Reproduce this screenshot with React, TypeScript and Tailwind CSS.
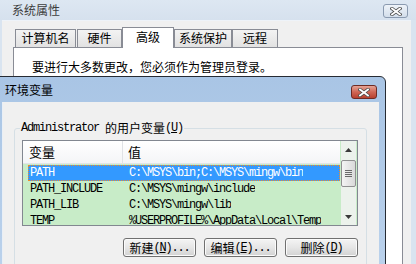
import React from "react";

const cjk = "[font-family:'Noto_Sans_CJK_SC',sans-serif]";
const mono = "[font-family:'Liberation_Mono','Noto_Sans_CJK_SC',monospace] text-[12px] tracking-[-1.2px]";

function XGlyph() {
  return (
    <svg width="12" height="9" viewBox="0 0 12 9">
      <path d="M2 1.5 L10 7.5 M10 1.5 L2 7.5" stroke="#4a4a4a" strokeWidth="3.4" strokeLinecap="square" />
      <path d="M2 1.5 L10 7.5 M10 1.5 L2 7.5" stroke="#ffffff" strokeWidth="1.8" strokeLinecap="square" />
    </svg>
  );
}

function Arrow({ down }: { down?: boolean }) {
  return (
    <svg width="7" height="4" viewBox="0 0 7 4">
      <path d={down ? "M0 0 H7 L3.5 4 Z" : "M0 4 H7 L3.5 0 Z"} fill="#3a3a3a" />
    </svg>
  );
}

const rows = [
  { name: "PATH", value: "C:\\MSYS\\bin;C:\\MSYS\\mingw\\bin", selected: true },
  { name: "PATH_INCLUDE", value: "C:\\MSYS\\mingw\\include" },
  { name: "PATH_LIB", value: "C:\\MSYS\\mingw\\lib" },
  { name: "TEMP", value: "%USERPROFILE%\\AppData\\Local\\Temp" },
];

const tabs = [
  { label: "计算机名", w: "w-[61px] ml-[2px]" },
  { label: "硬件", w: "w-[45px] ml-[1px]" },
  { label: "高级", w: "w-[52px]", active: true },
  { label: "系统保护", w: "w-[58px]" },
  { label: "远程", w: "w-[46px]" },
];

function WinButton({ label, hint, tail }: { label: string; hint: string; tail?: string }) {
  return (
    <button className="flex h-[19px] w-[73px] items-center justify-center rounded-[3px] border border-[#707070] bg-linear-to-b from-[#f4f4f4] via-[#e6e6e6] to-[#d2d2d2] text-black shadow-[inset_0_0_0_1px_#fbfbfb]">
      <span className={`${cjk} text-[12px] leading-none`}>{label}</span>
      <span className={`${mono} leading-none`}>
        (<u>{hint}</u>){tail}
      </span>
    </button>
  );
}

export default function App() {
  return (
    <div className="relative h-[264px] w-[416px] overflow-hidden bg-[#d9e4f0] text-black">
      {/* back window: 系统属性 */}
      <div className="flex h-full flex-col">
        <div className="flex h-[20px] shrink-0 items-start justify-between bg-linear-to-b from-[#dde7f2] to-[#d6e1ee] pl-[12px] pr-[8px]">
          <span className={`${cjk} pt-[3px] text-[12px] leading-[14px] text-[#3d3d3d]`}>系统属性</span>
          <span className="mt-[4px] flex h-[14px] w-[25px] items-center justify-center rounded-[3px] border border-[#8a9ab0] bg-linear-to-b from-[#eef3f9] to-[#d3deeb]">
            <XGlyph />
          </span>
        </div>
        <div className="ml-[2px] mr-[5px] flex-1 border-t border-[#eef3f9] bg-[#f0f0f0] pl-[11px] pr-[8px] pt-[6px]">
          <div className="flex h-[21px] items-end">
            {tabs.map((t) => (
              <div
                key={t.label}
                className={`${t.w} ${cjk} flex items-center justify-center border border-[#898c95] text-[12px] leading-none ${
                  t.active
                    ? "relative z-10 h-[21px] border-b-0 bg-white pb-[3px]"
                    : "h-[19px] bg-linear-to-b from-[#f3f3f3] to-[#e2e2e2] pb-[1px]"
                }`}
              >
                {t.label}
              </div>
            ))}
          </div>
          <div className="-mt-[1px] h-[240px] border border-[#898c95] bg-white pl-[18px] pt-[12px]">
            <p className={`${cjk} text-[12px] leading-[14px]`}>要进行大多数更改，您必须作为管理员登录。</p>
          </div>
        </div>
      </div>

      {/* front window: 环境变量 */}
      <div className="absolute left-[-5px] top-[76px] flex h-[200px] w-[391px] flex-col rounded-tr-[6px] border border-[#262b33] bg-linear-to-b from-[#a9c5e5] to-[#bbd2ec]">
        <div className="flex h-[25px] shrink-0 items-start justify-between pl-[9px] pr-[8px]">
          <span className={`${cjk} self-center text-[12px] leading-[14px]`}>环境变量</span>
          <span className="mt-[8px] flex h-[14px] w-[26px] items-center justify-center rounded-[3px] border border-[#6e2b24] bg-linear-to-b from-[#e4a396] via-[#cf6655] to-[#b8402f]">
            <XGlyph />
          </span>
        </div>
        <div className="mx-[6px] flex-1 border-l border-[#e9eff6] bg-[#f0f0f0] pl-[11px] pt-[26px]">
          <div className="relative w-[353px] rounded-[3px] border border-[#d5dfe5] pb-[20px] pl-[7px] pt-[11px]">
            <span className="absolute left-[5px] top-[-8px] flex items-center gap-[6px] bg-[#f0f0f0] px-[1px] leading-[14px]">
              <span className={mono}>Administrator</span>
              <span className="flex items-center">
                <span className={`${cjk} text-[12px]`}>的用户变量</span>
                <span className={mono}>
                  (<u>U</u>)
                </span>
              </span>
            </span>

            <div className="flex h-[86px] w-[336px] overflow-hidden border border-[#828790] bg-[#c8ecc8]">
              <div className="flex min-w-0 flex-1 flex-col">
                <div className="flex h-[23px] shrink-0 items-center border-b border-[#e2e4e7] bg-linear-to-b from-white to-[#f4f5f7]">
                  <div className={`${cjk} flex h-full w-[100px] items-center border-r border-[#e0e2e6] pl-[6px] text-[13px]`}>变量</div>
                  <div className={`${cjk} pl-[5px] text-[13px]`}>值</div>
                </div>
                <div className="pt-[1px]">
                  {rows.map((r) => (
                    <div
                      key={r.name}
                      className={`ml-[5px] flex h-[16px] items-center whitespace-nowrap ${
                        r.selected
                          ? "bg-[#3399ff] text-white outline-1 -outline-offset-1 outline-dotted outline-[#ee8a2a]"
                          : ""
                      }`}
                    >
                      <span className={`${mono} w-[99px] shrink-0 pl-[2px] leading-none`}>{r.name}</span>
                      <span className={`${mono} overflow-hidden pl-[2px] leading-none`}>{r.value}</span>
                    </div>
                  ))}
                </div>
              </div>
              <div className="mx-[1px] flex w-[15px] shrink-0 flex-col bg-[#ecf2ec]">
                <div className="flex h-[17px] items-center justify-center">
                  <Arrow />
                </div>
                <div className="mt-[2px] flex h-[27px] flex-col items-center justify-center gap-[1px] rounded-[2px] border border-[#8f9090] bg-linear-to-r from-[#f4f4f4] to-[#d9d9d9]">
                  <span className="h-[1px] w-[7px] bg-[#6a6a6a]" />
                  <span className="h-[1px] w-[7px] bg-[#6a6a6a]" />
                  <span className="h-[1px] w-[7px] bg-[#6a6a6a]" />
                  <span className="h-[1px] w-[7px] bg-[#6a6a6a]" />
                </div>
                <div className="flex-1" />
                <div className="flex h-[17px] items-center justify-center">
                  <Arrow down />
                </div>
              </div>
            </div>

            <div className="mt-[12px] flex w-[336px] justify-end gap-[8px]">
              <WinButton label="新建" hint="N" tail="..." />
              <WinButton label="编辑" hint="E" tail="..." />
              <WinButton label="删除" hint="D" />
            </div>
          </div>
        </div>
      </div>
    </div>
  );
}
